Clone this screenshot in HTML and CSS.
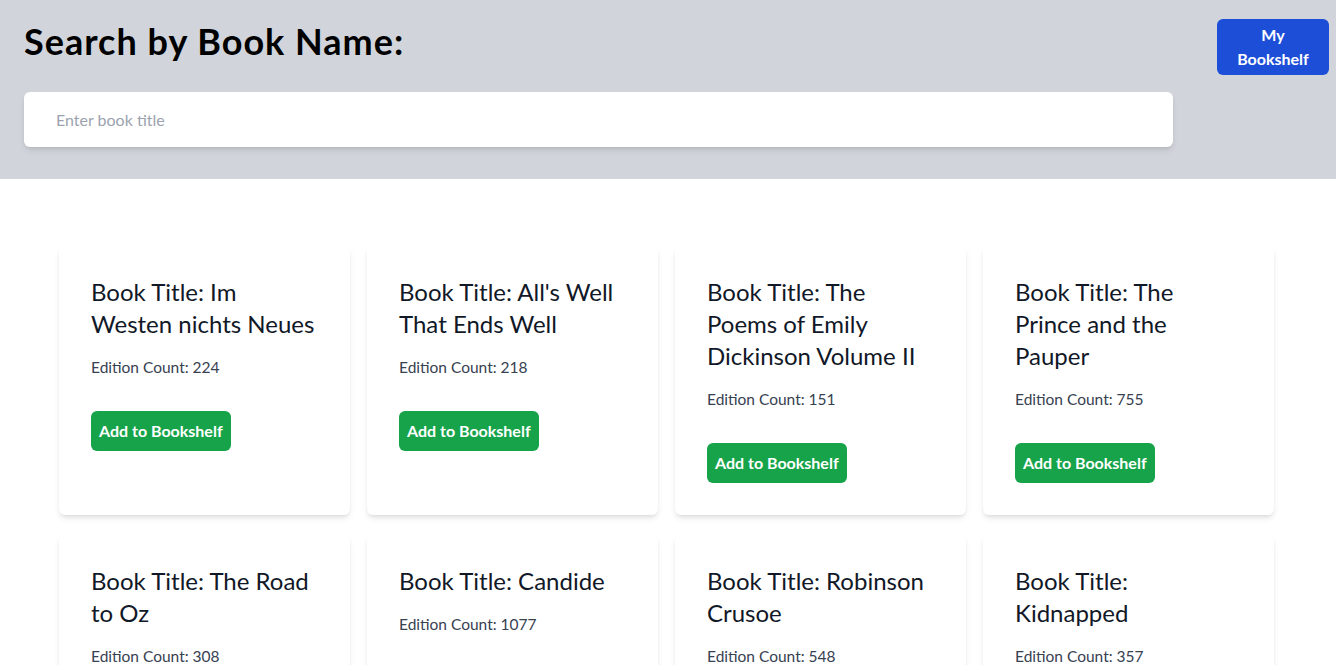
FILE: index.html
```html
<!DOCTYPE html>
<html lang="en">
<head>
<meta charset="utf-8">
<title>Book Search</title>
<link rel="stylesheet" href="styles.css">
</head>
<body>
<header class="topbar">
  <div class="search">
    <h1 class="search-title">Search by Book Name:</h1>
    <input class="search-input" type="text" placeholder="Enter book title">
  </div>
  <button class="shelf-btn">My Bookshelf</button>
</header>
<main class="results">
  <div class="grid">
    <div class="card">
      <h2 class="card-title">Book Title: Im Westen nichts Neues</h2>
      <p class="card-count">Edition Count: 224</p>
      <button class="add-btn">Add to Bookshelf</button>
    </div>
    <div class="card">
      <h2 class="card-title">Book Title: All's Well That Ends Well</h2>
      <p class="card-count">Edition Count: 218</p>
      <button class="add-btn">Add to Bookshelf</button>
    </div>
    <div class="card">
      <h2 class="card-title">Book Title: The Poems of Emily Dickinson Volume II</h2>
      <p class="card-count">Edition Count: 151</p>
      <button class="add-btn">Add to Bookshelf</button>
    </div>
    <div class="card">
      <h2 class="card-title">Book Title: The Prince and the Pauper</h2>
      <p class="card-count">Edition Count: 755</p>
      <button class="add-btn">Add to Bookshelf</button>
    </div>
    <div class="card">
      <h2 class="card-title">Book Title: The Road to Oz</h2>
      <p class="card-count">Edition Count: 308</p>
      <button class="add-btn">Add to Bookshelf</button>
    </div>
    <div class="card">
      <h2 class="card-title">Book Title: Candide</h2>
      <p class="card-count">Edition Count: 1077</p>
      <button class="add-btn">Add to Bookshelf</button>
    </div>
    <div class="card">
      <h2 class="card-title">Book Title: Robinson Crusoe</h2>
      <p class="card-count">Edition Count: 548</p>
      <button class="add-btn">Add to Bookshelf</button>
    </div>
    <div class="card">
      <h2 class="card-title">Book Title: Kidnapped</h2>
      <p class="card-count">Edition Count: 357</p>
      <button class="add-btn">Add to Bookshelf</button>
    </div>
  </div>
</main>
</body>
</html>
```
FILE: styles.css
```css
* { box-sizing: border-box; }
html, body { margin: 0; padding: 0; background: #ffffff; }
body {
  font-family: Lato, "Open Sans", "Noto Sans", sans-serif;
  color: #111827;
  overflow: hidden;
}
.topbar {
  background: #d1d5db;
  display: flex;
  align-items: flex-start;
  padding: 19px 7px 32px 24px;
}
.search { flex: 1; }
.search-title {
  margin: 2px 0 0;
  font-size: 36px;
  line-height: 40px;
  font-weight: 700;
  letter-spacing: 1px;
  color: #000000;
}
.search-input {
  display: block;
  margin-top: 31px;
  width: 100%;
  height: 55px;
  border: none;
  border-radius: 6px;
  background: #ffffff;
  padding: 0 32px;
  font-family: inherit;
  font-size: 16px;
  color: #111827;
  box-shadow: 0 4px 6px -1px rgba(0,0,0,0.1), 0 2px 4px -2px rgba(0,0,0,0.1);
  outline: none;
}
.search-input::placeholder { color: #9ca3af; }
.shelf-btn {
  margin-left: 44px;
  width: 112px;
  padding: 4px 16px;
  border: none;
  border-radius: 6px;
  background: #1d4ed8;
  color: #ffffff;
  font-family: inherit;
  font-size: 16px;
  line-height: 24px;
  font-weight: 700;
}
.results {
  padding: 67px 62px 40px 59px;
}
.grid {
  display: grid;
  grid-template-columns: repeat(4, 1fr);
  column-gap: 17px;
  row-gap: 20px;
}
.card {
  background: #ffffff;
  border-radius: 6px;
  padding: 30px 32px 32px;
  box-shadow: 0 4px 6px -1px rgba(0,0,0,0.1), 0 2px 4px -2px rgba(0,0,0,0.1);
}
.card-title {
  margin: 0;
  font-size: 24px;
  line-height: 32px;
  font-weight: 400;
  color: #111827;
}
.card-count {
  margin: 17px 0 0;
  font-size: 15.5px;
  line-height: 20px;
  color: #374151;
}
.add-btn {
  display: inline-block;
  margin-top: 34px;
  padding: 8px;
  border: none;
  border-radius: 6px;
  background: #16a34a;
  color: #ffffff;
  font-family: inherit;
  font-size: 16px;
  line-height: 24px;
  font-weight: 700;
}
```
